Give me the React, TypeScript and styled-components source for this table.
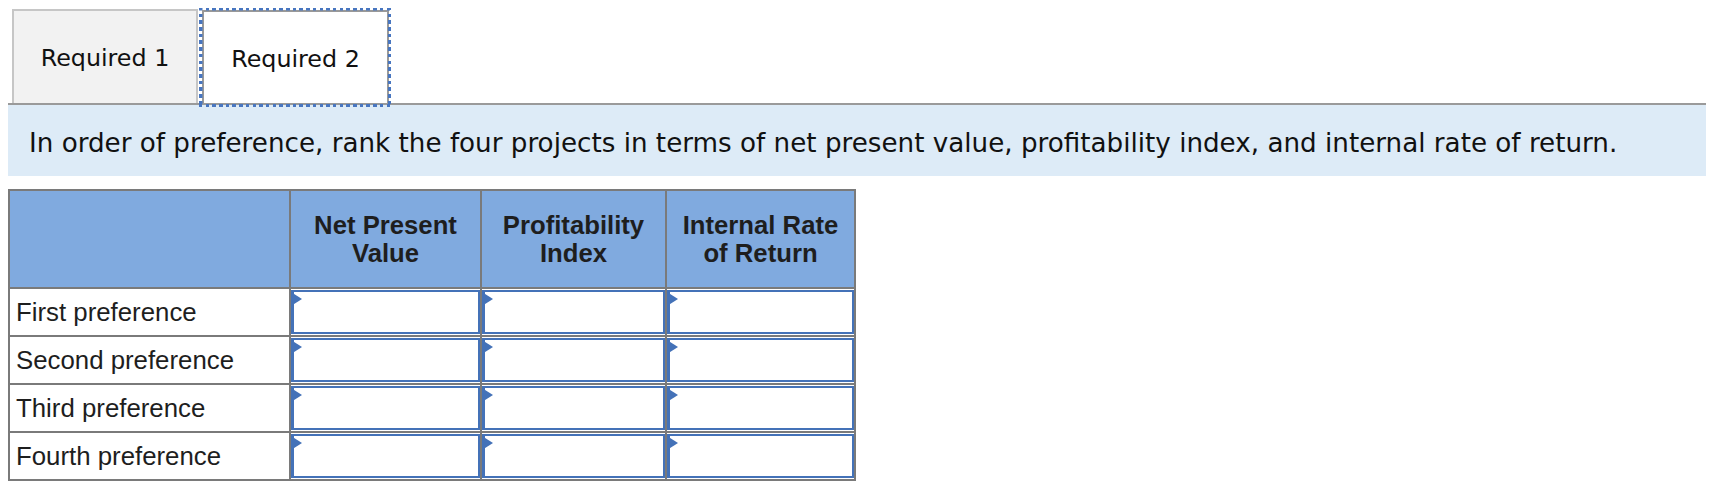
import React from "react";
import styled, { createGlobalStyle } from "styled-components";

const Global = createGlobalStyle`
  body {
    margin: 8px;
    background: #ffffff;
    font-family: "DejaVu Sans", Verdana, sans-serif;
  }
`;

const Page = styled.div`
  display: flex;
  flex-direction: column;
`;

const TabBar = styled.div`
  display: flex;
  align-items: flex-end;
  gap: 4px;
  height: 95px;
  padding-left: 4px;
  border-bottom: 2px solid #9a9a9a;
  position: relative;
  z-index: 1;
`;

const dots = "#4876c0";

const Tab = styled.div<{ $active?: boolean }>`
  position: relative;
  box-sizing: border-box;
  display: flex;
  align-items: center;
  justify-content: center;
  width: ${(p) => (p.$active ? "187px" : "186px")};
  height: ${(p) => (p.$active ? "93px" : "94px")};
  background: ${(p) => (p.$active ? "#ffffff" : "#f2f2f2")};
  border: 2px solid ${(p) => (p.$active ? "#999999" : "#c6c6c6")};
  border-bottom: none;
  font-family: "DejaVu Sans", Verdana, sans-serif;
  font-size: 23.8px;
  color: #111;
  padding-top: 2px;

  ${(p) =>
    p.$active
      ? `&::after {
    content: "";
    position: absolute;
    top: -5px;
    left: -5px;
    right: -4px;
    bottom: -4px;
    pointer-events: none;
    background:
      repeating-linear-gradient(90deg, ${dots} 0 3.5px, transparent 3.5px 6.7px) left top / 100% 3.5px no-repeat,
      repeating-linear-gradient(90deg, ${dots} 0 3.5px, transparent 3.5px 6.7px) left bottom / 100% 3.5px no-repeat,
      repeating-linear-gradient(180deg, ${dots} 0 3.5px, transparent 3.5px 6.7px) left top / 3.5px 100% no-repeat,
      repeating-linear-gradient(180deg, ${dots} 0 3.5px, transparent 3.5px 6.7px) right top / 3.5px 100% no-repeat;
  }`
      : ""}
`;

const Prompt = styled.div`
  background: #ddebf7;
  height: 71px;
  box-sizing: border-box;
  padding: 23px 21px 0 21px;
  font-family: "DejaVu Sans", Verdana, sans-serif;
  font-size: 26.2px;
  color: #111;
  line-height: 30px;
  white-space: nowrap;
`;

const Table = styled.table`
  margin-top: 13px;
  border-collapse: collapse;
  table-layout: fixed;
  width: 848px;
  border: 2px solid #7a7a7a;
  font-family: "Liberation Sans", Arial, sans-serif;
`;

const HeadCell = styled.th`
  background: #80aadf;
  border: 2px solid #7a7a7a;
  height: 96px;
  padding: 0 4px;
  font-size: 25.7px;
  font-weight: bold;
  color: #1e1e1e;
  text-align: center;
  vertical-align: middle;
  line-height: 28.5px;
`;

const LabelCell = styled.td`
  border: 2px solid #7a7a7a;
  height: 45px;
  padding: 0 0 0 6px;
  font-size: 25.8px;
  color: #1e1e1e;
  vertical-align: middle;
  white-space: nowrap;
`;

const InputCell = styled.td`
  border: 2px solid #7a7a7a;
  padding: 1px 0 0 0;
  height: 45px;
  vertical-align: top;
`;

const InputBox = styled.div`
  position: relative;
  box-sizing: border-box;
  height: 44px;
  border: 2px solid #4472b8;
  border-left-width: 3px;
  background: #fff;

  &::before {
    content: "";
    position: absolute;
    left: -3px;
    top: 0;
    width: 0;
    height: 0;
    border-left: 11px solid #4472b8;
    border-top: 7px solid transparent;
    border-bottom: 7px solid transparent;
  }
`;

const rows = ["First preference", "Second preference", "Third preference", "Fourth preference"];

export default function App() {
  return (
    <Page>
      <Global />
      <TabBar>
        <Tab>Required 1</Tab>
        <Tab $active>Required 2</Tab>
      </TabBar>
      <Prompt>
        In order of preference, rank the four projects in terms of net present value, profitability index, and internal rate of return.
      </Prompt>
      <Table>
        <colgroup>
          <col style={{ width: 281 }} />
          <col style={{ width: 191 }} />
          <col style={{ width: 185 }} />
          <col style={{ width: 189 }} />
        </colgroup>
        <thead>
          <tr>
            <HeadCell />
            <HeadCell>
              Net Present
              <br />
              Value
            </HeadCell>
            <HeadCell>
              Profitability
              <br />
              Index
            </HeadCell>
            <HeadCell>
              Internal Rate
              <br />
              of Return
            </HeadCell>
          </tr>
        </thead>
        <tbody>
          {rows.map((r) => (
            <tr key={r}>
              <LabelCell>{r}</LabelCell>
              <InputCell>
                <InputBox />
              </InputCell>
              <InputCell>
                <InputBox />
              </InputCell>
              <InputCell>
                <InputBox />
              </InputCell>
            </tr>
          ))}
        </tbody>
      </Table>
    </Page>
  );
}
